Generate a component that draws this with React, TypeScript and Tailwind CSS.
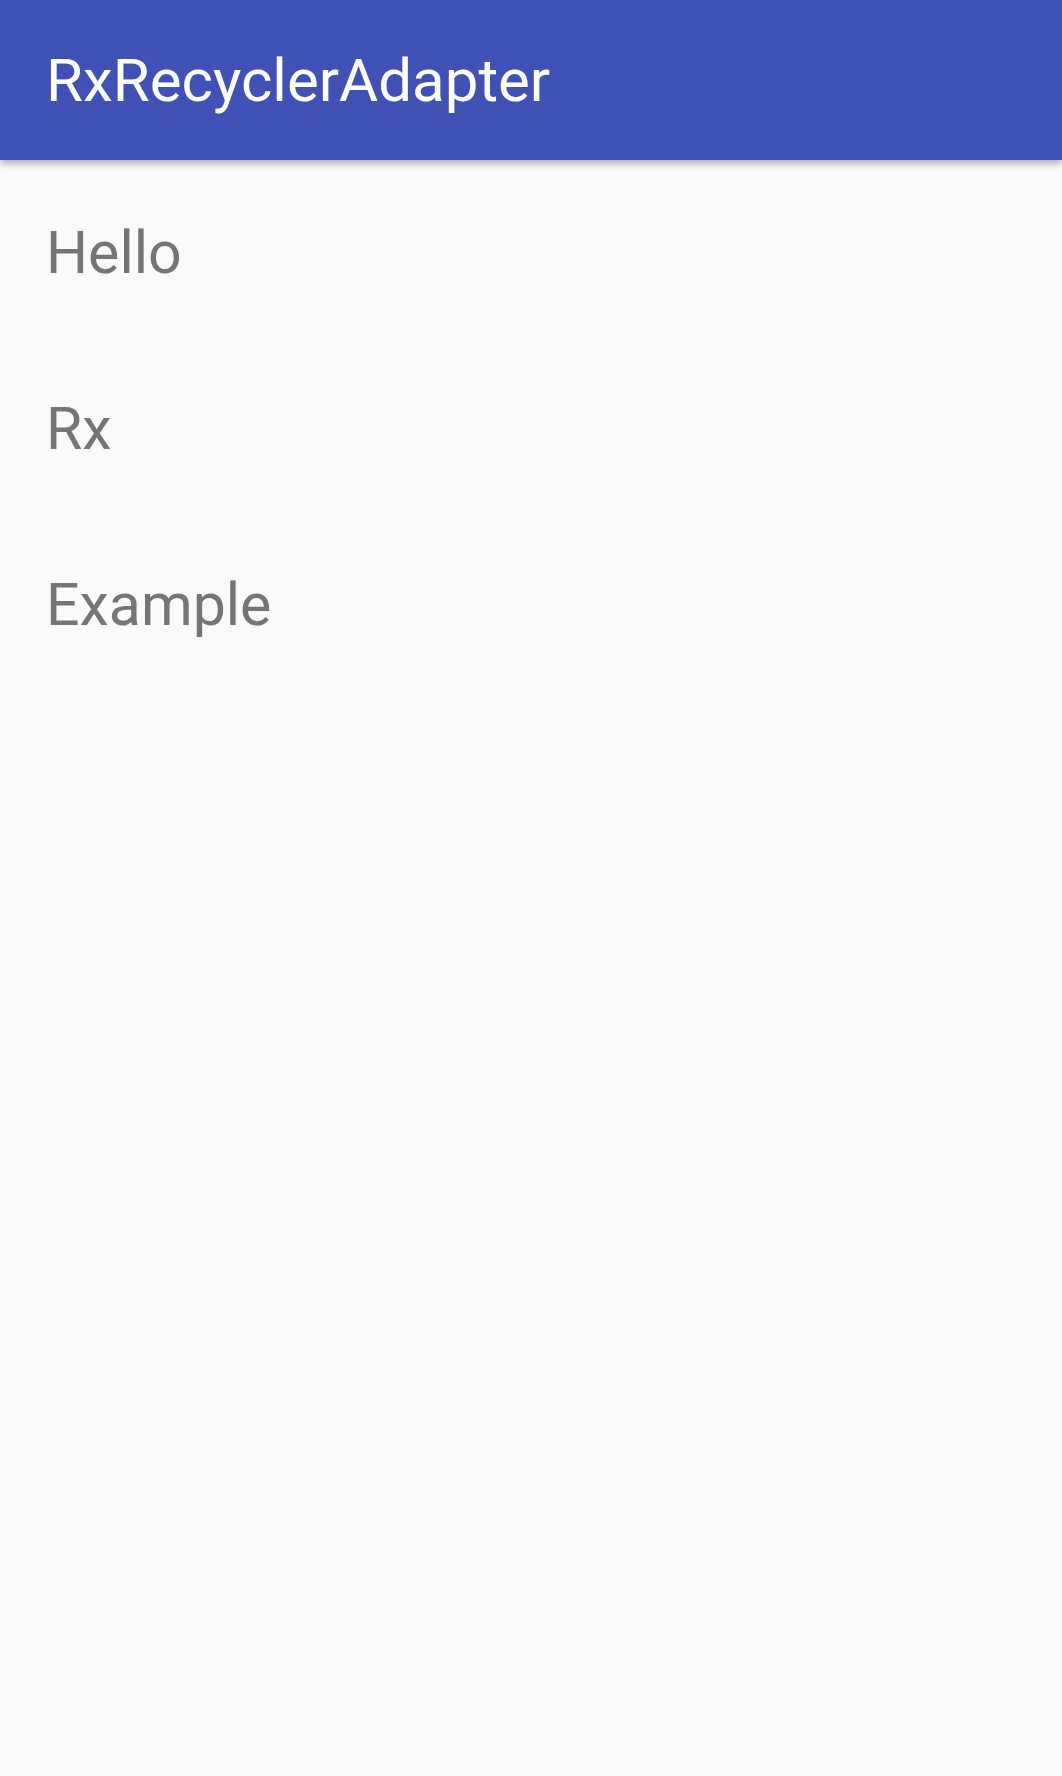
import React from "react";

const items = ["Hello", "Rx", "Example"];

export default function App() {
  return (
    <div className="w-[1062px] h-[1776px] bg-[#fafafa] overflow-hidden flex flex-col" style={{ fontFamily: "Roboto, 'Noto Sans', sans-serif" }}>
      <header className="relative z-10 h-[160px] shrink-0 bg-[#3f51b5] pl-[46px] pt-[51px] shadow-[0_3px_8px_rgba(0,0,0,0.35)]">
        <h1 className="text-[60px] leading-none text-white font-normal">RxRecyclerAdapter</h1>
      </header>
      <ul className="flex-1 pt-[8px]">
        {items.map((t) => (
          <li key={t} className="h-[176px] pl-[46px] pt-[55px]">
            <span className="text-[59px] leading-none text-[#757575]">{t}</span>
          </li>
        ))}
      </ul>
    </div>
  );
}
